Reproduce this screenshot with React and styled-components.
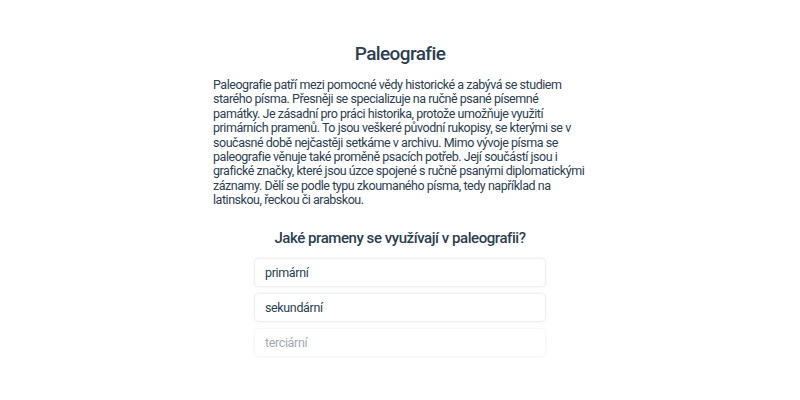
import styled, { createGlobalStyle } from "styled-components";

const GlobalStyle = createGlobalStyle`
  body {
    margin: 0;
    background: #ffffff;
    font-family: Roboto, "Noto Sans", sans-serif;
    color: #2c3e50;
  }
`;

const Page = styled.div`
  width: 800px;
  height: 400px;
  display: flex;
  flex-direction: column;
  align-items: center;
  padding-top: 41px;
  box-sizing: border-box;
`;

const Title = styled.h1`
  margin: 0;
  font-size: 19px;
  font-weight: 500;
  letter-spacing: -0.6px;
  line-height: 26px;
`;

const Text = styled.p`
  width: 374px;
  margin: 11px 0 0 0;
  font-size: 12.5px;
  letter-spacing: -0.46px;
  line-height: 14.4px;
`;

const Question = styled.h2`
  margin: 20px 0 0 0;
  font-size: 15px;
  font-weight: 500;
  letter-spacing: -0.44px;
  line-height: 20px;
`;

const Options = styled.div`
  display: flex;
  flex-direction: column;
  gap: 8px;
  margin-top: 11px;
  width: 290px;
`;

const Option = styled.div`
  height: 27px;
  display: flex;
  align-items: center;
  padding: 0 10px;
  border-radius: 4px;
  background: #ffffff;
  box-shadow: 0 0 3px rgba(0, 0, 0, 0.18);
  font-size: 12.5px;
  letter-spacing: -0.36px;
  opacity: ${(p) => (p.$faded ? 0.45 : 1)};
`;

const options = [
  { label: "primární" },
  { label: "sekundární" },
  { label: "terciární", faded: true },
];

export default function App() {
  return (
    <>
      <GlobalStyle />
      <Page>
        <Title>Paleografie</Title>
        <Text>
          Paleografie patří mezi pomocné vědy historické a zabývá se studiem
          starého písma. Přesněji se specializuje na ručně psané písemné
          památky. Je zásadní pro práci historika, protože umožňuje využití
          primárních pramenů. To jsou veškeré původní rukopisy, se kterými se v
          současné době nejčastěji setkáme v archivu. Mimo vývoje písma se
          paleografie věnuje také proměně psacích potřeb. Její součástí jsou i
          grafické značky, které jsou úzce spojené s ručně psanými
          diplomatickými záznamy. Dělí se podle typu zkoumaného písma, tedy
          například na latinskou, řeckou či arabskou.
        </Text>
        <Question>Jaké prameny se využívají v paleografii?</Question>
        <Options>
          {options.map((o) => (
            <Option key={o.label} $faded={o.faded}>
              {o.label}
            </Option>
          ))}
        </Options>
      </Page>
    </>
  );
}
